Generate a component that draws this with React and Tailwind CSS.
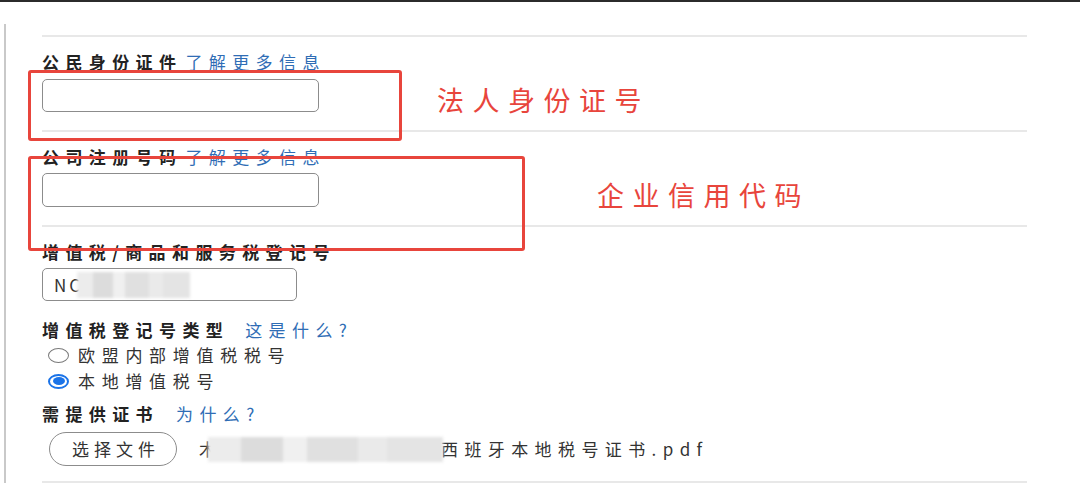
import React from "react";

const FONT = "font-['Noto_Sans_CJK_SC','Noto_Sans',sans-serif]";

// Dummy blurred block (the screenshot hides part of the value)
const Smudge = ({ className }) => (
    <div className={`flex blur-[1.5px] ${className}`}>
        <div className="w-[14%] bg-[#ececec]" />
        <div className="w-[18%] bg-[#dcdcdc]" />
        <div className="w-[10%] bg-[#f0f0f0]" />
        <div className="w-[22%] bg-[#e0e0e0]" />
        <div className="w-[12%] bg-[#eaeaea]" />
        <div className="w-[24%] bg-[#e4e4e4]" />
    </div>
);

const Divider = ({ className = "" }) => (
    <div className={`h-[2px] w-full bg-[#e8e8e8] ${className}`} />
);

const Label = ({ text, link, gap = "ml-[3px]", className = "" }) => (
    <div className={`flex h-[20px] items-center whitespace-nowrap ${className}`}>
        <span className="text-[17px] leading-[20px] font-bold text-[#222] tracking-[6.4px]">{text}</span>
        {link && (
            <span className={`text-[17px] leading-[20px] text-[#2f6db5] tracking-[6.4px] ${gap}`}>{link}</span>
        )}
    </div>
);

const Radio = ({ checked, text, className = "" }) => (
    <div className={`flex h-[22px] items-center ${className}`}>
        {checked ? (
            <div className="ml-[6px] flex h-[15px] w-[21px] items-center justify-center rounded-[50%] border-2 border-[#1a73e8]">
                <div className="h-[8px] w-[12px] rounded-[50%] bg-[#1a73e8]" />
            </div>
        ) : (
            <div className="ml-[6px] h-[15px] w-[21px] rounded-[50%] border-[1.5px] border-[#7a7a7a]" />
        )}
        <span className="ml-[9px] text-[17px] leading-[20px] text-[#333] tracking-[6.7px]">{text}</span>
    </div>
);

export default function App() {
    return (
        <div className={`relative flex h-[483px] w-[1080px] flex-col overflow-hidden bg-white ${FONT}`}>
            {/* window edge */}
            <div className="h-[2px] w-full bg-[#2b2b2b]" />

            <div className="flex flex-1">
                <div className="ml-[4px] mt-[22px] w-[2px] bg-[#c9c9c9]" />

                <div className="ml-[36px] flex w-[985px] flex-col">
                    <Divider className="mt-[33px]" />

                    {/* citizen id */}
                    <Label text="公民身份证件" link="了解更多信息" className="mt-[15px]" />
                    <div className="mt-[7px] h-[33px] w-[277px] rounded-[5px] border-[1.5px] border-[#8c8c8c]" />
                    <Divider className="mt-[18px]" />

                    {/* company reg number */}
                    <Label text="公司注册号码" link="了解更多信息" className="mt-[15px]" />
                    <div className="mt-[6px] h-[34px] w-[277px] rounded-[5px] border-[1.5px] border-[#8c8c8c]" />
                    <Divider className="mt-[18px]" />

                    {/* vat */}
                    <Label text="增值税/商品和服务税登记号" className="mt-[15px]" />
                    <div className="mt-[6px] flex h-[33px] w-[255px] items-center rounded-[5px] border-[1.5px] border-[#8c8c8c]">
                        <span className="ml-[11px] text-[17px] text-[#333] tracking-[3px]">NC</span>
                        <Smudge className="-ml-[6px] h-[26px] w-[113px]" />
                    </div>

                    <Label text="增值税登记号类型" link="这是什么?" gap="ml-[16px]" className="mt-[19px]" />
                    <Radio text="欧盟内部增值税税号" className="mt-[4px]" />
                    <Radio checked text="本地增值税号" className="mt-[4px]" />

                    <Label text="需提供证书" link="为什么?" gap="ml-[17px]" className="mt-[12px]" />
                    <div className="mt-[8px] flex items-center">
                        <button className="ml-[7px] flex h-[34px] w-[128px] items-center justify-center rounded-full border-[1.5px] border-[#8c8c8c] bg-white">
                            <span className="ml-[6px] text-[17px] text-[#333] tracking-[5px]">选择文件</span>
                        </button>
                        <span className="ml-[22px] text-[17px] text-[#333]">木</span>
                        <Smudge className="-ml-[8px] h-[25px] w-[235px]" />
                        <span className="-ml-[2px] text-[17px] text-[#333] tracking-[6.4px]">西班牙本地税号证书.pdf</span>
                    </div>

                    <Divider className="mt-[15px]" />
                </div>
            </div>

            {/* red annotations drawn over the form */}
            <div className="pointer-events-none absolute inset-0">
                <div className="absolute left-[28px] top-[70px] h-[71px] w-[374px] rounded-[3px] border-[3px] border-[#e8453c]" />
                <div className="absolute left-[28px] top-[156px] h-[95px] w-[497px] rounded-[3px] border-[3px] border-[#e8453c]" />
                <span className="absolute left-[437px] top-[83px] text-[27px] leading-[34px] text-[#e8453c] tracking-[8.5px]">法人身份证号</span>
                <span className="absolute left-[597px] top-[178px] text-[27px] leading-[34px] text-[#e8453c] tracking-[8.5px]">企业信用代码</span>
            </div>
        </div>
    );
}
